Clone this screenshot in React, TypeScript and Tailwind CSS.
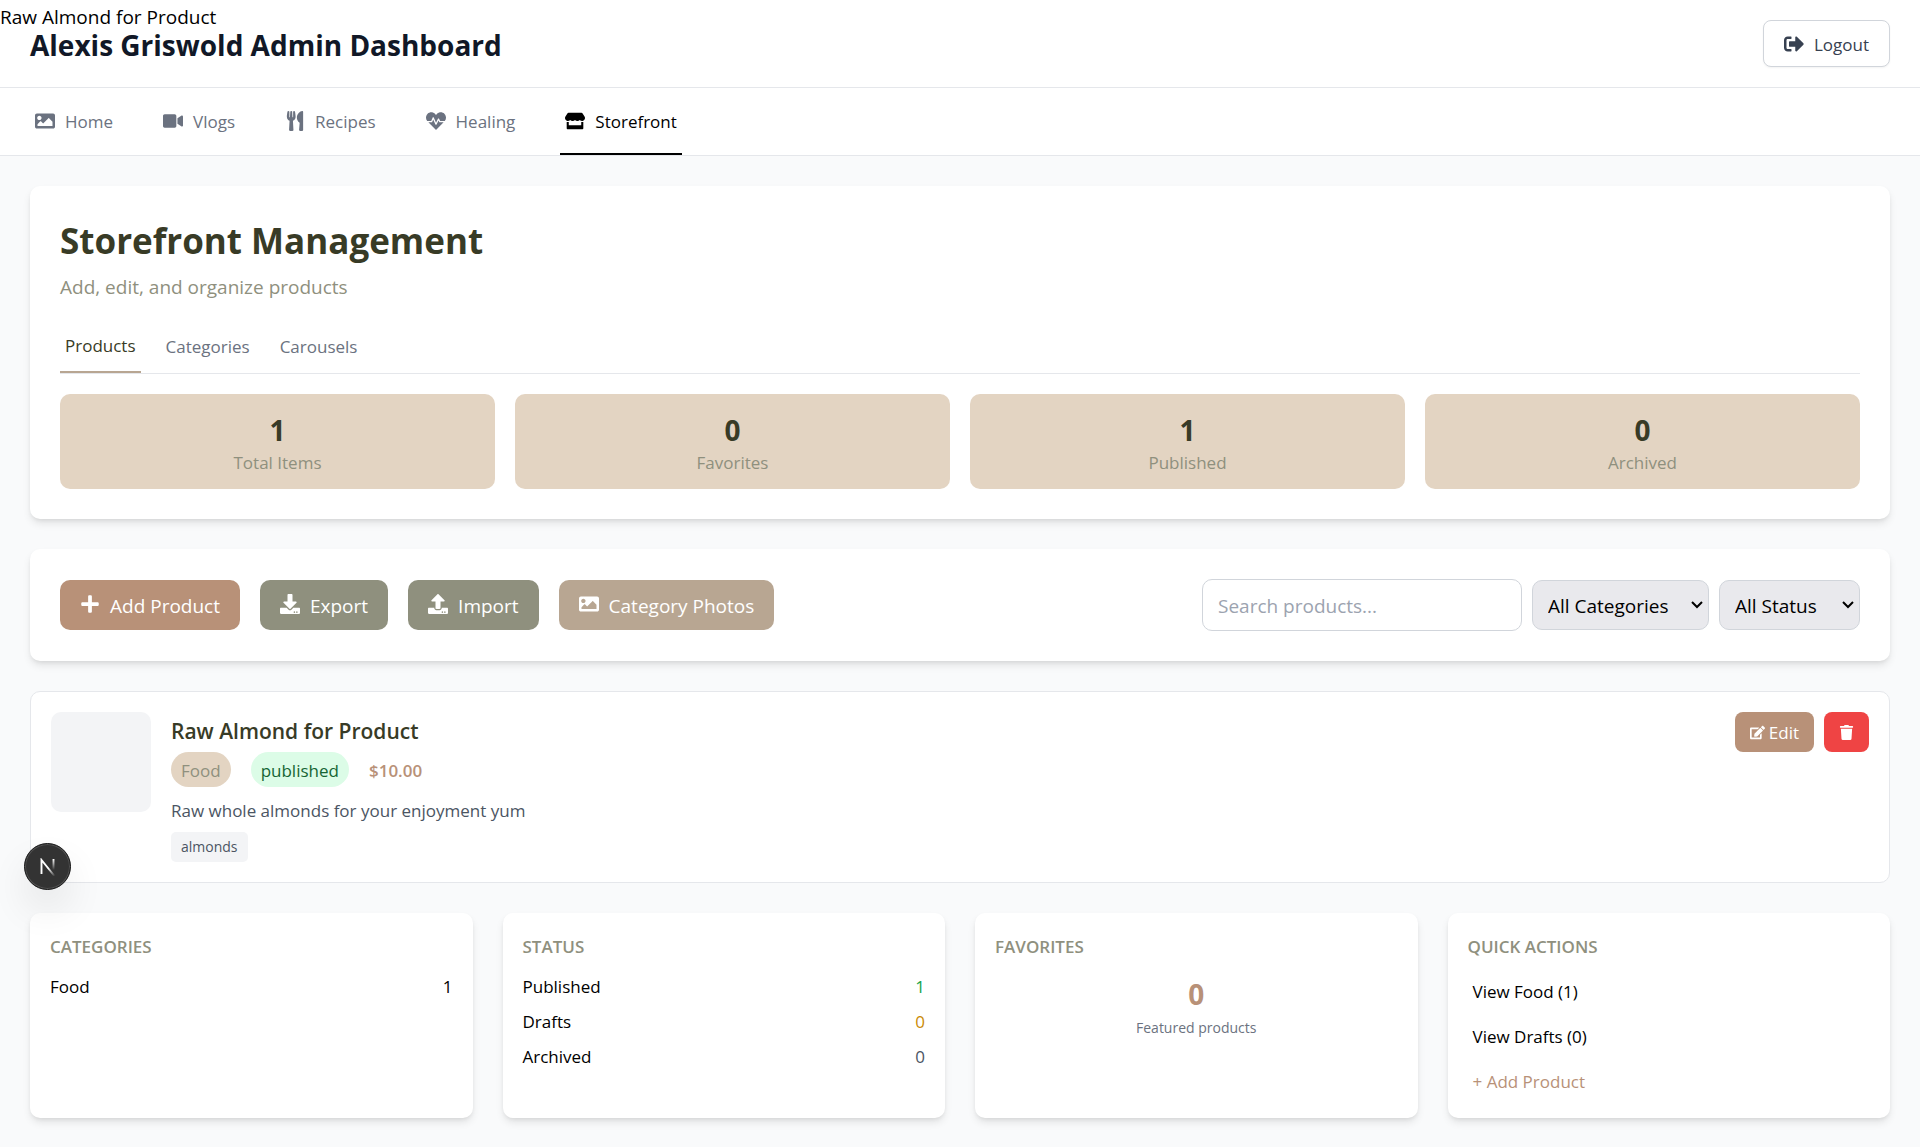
import type { ComponentType, ReactNode } from "react";
import {
  FaDownload,
  FaEdit,
  FaHeartbeat,
  FaImage,
  FaPlus,
  FaSignOutAlt,
  FaStore,
  FaTrash,
  FaUpload,
  FaUtensils,
  FaVideo,
} from "react-icons/fa";

type Icon = ComponentType<{ className?: string }>;

const navItems: { label: string; icon: Icon; active?: boolean }[] = [
  { label: "Home", icon: FaImage },
  { label: "Vlogs", icon: FaVideo },
  { label: "Recipes", icon: FaUtensils },
  { label: "Healing", icon: FaHeartbeat },
  { label: "Storefront", icon: FaStore, active: true },
];

const stats = [
  { value: 1, label: "Total Items" },
  { value: 0, label: "Favorites" },
  { value: 1, label: "Published" },
  { value: 0, label: "Archived" },
];

const tools: { label: string; icon: Icon; color: string }[] = [
  { label: "Add Product", icon: FaPlus, color: "bg-[#b89178]" },
  { label: "Export", icon: FaDownload, color: "bg-[#8f907e]" },
  { label: "Import", icon: FaUpload, color: "bg-[#8f907e]" },
  { label: "Category Photos", icon: FaImage, color: "bg-[#b8a692]" },
];

const statuses = [
  { label: "Published", value: 1, color: "text-[#16a34a]" },
  { label: "Drafts", value: 0, color: "text-[#ca8a04]" },
  { label: "Archived", value: 0, color: "text-[#4b5563]" },
];

const cardShadow = "shadow-[0_5px_8px_-1px_rgba(0,0,0,0.1),0_2px_5px_-2px_rgba(0,0,0,0.1)]";

function Header() {
  return (
    <header className="flex items-center justify-between border-b border-[#e5e7eb] bg-white px-[30px] py-5">
      <h1 className="pt-0.5 text-[28px] leading-[44px] font-bold text-[#111827]">Alexis Griswold Admin Dashboard</h1>
      <button
        type="button"
        className="flex items-center gap-2.5 rounded-[8px] border border-[#d1d5db] bg-white px-5 pt-[11px] pb-[9px] text-[17px] leading-[25px] text-[#374151] shadow-xs"
      >
        <FaSignOutAlt className="mb-0.5 size-5" />
        Logout
      </button>
    </header>
  );
}

function Nav() {
  return (
    <nav className="flex gap-10 border-b border-[#e5e7eb] bg-white px-[30px]">
      {navItems.map(({ label, icon: Glyph, active }) => (
        <a
          key={label}
          href="#"
          aria-current={active ? "page" : undefined}
          className={
            active
              ? "flex items-center gap-2.5 border-b-2 border-black px-[5px] pt-[21px] pb-[19px] text-[17px] leading-[25px] text-black"
              : "flex items-center gap-2.5 border-b-2 border-transparent px-[5px] pt-[21px] pb-[19px] text-[17px] leading-[25px] text-[#6b7280]"
          }
        >
          <Glyph className="mb-0.5 size-5" />
          {label}
        </a>
      ))}
    </nav>
  );
}

function Overview() {
  return (
    <section className={`rounded-[10px] bg-white p-[30px] ${cardShadow}`}>
      <h2 className="text-[35px] leading-[50px] font-bold text-[#383b26]">Storefront Management</h2>
      <p className="mt-1 text-[19px] leading-[35px] text-[#8f907e]">Add, edit, and organize products</p>
      <div className="mt-[15px] flex gap-5 border-b border-[#e5e7eb] text-[17px] leading-[25px]">
        <button type="button" className="border-b-2 border-[#b8a692] px-[5px] py-[13px] text-[#383b26]">
          Products
        </button>
        <button type="button" className="px-[5px] py-[13px] text-[#6b7280]">
          Categories
        </button>
        <button type="button" className="px-[5px] py-[13px] text-[#6b7280]">
          Carousels
        </button>
      </div>
      <div className="mt-5 grid grid-cols-4 gap-5">
        {stats.map(({ value, label }) => (
          <div key={label} className="rounded-[10px] bg-[#e3d4c2] pt-4 pb-3.5 text-center">
            <div className="text-[28px] leading-[40px] font-bold text-[#383b26]">{value}</div>
            <div className="text-[17px] leading-[25px] text-[#8f907e]">{label}</div>
          </div>
        ))}
      </div>
    </section>
  );
}

function FilterSelect({ label, width }: { label: string; width: string }) {
  return (
    <div className={`relative ${width}`}>
      <select
        aria-label={label}
        className="h-[50px] w-full appearance-none rounded-[10px] border border-[#d1d5db] bg-[#e9e9ed] pt-0.5 pl-[15px] text-[19px] text-black"
      >
        <option>{label}</option>
      </select>
      <svg
        viewBox="0 0 12 8"
        aria-hidden="true"
        className="pointer-events-none absolute top-[21px] right-[6px] h-2 w-3 fill-none stroke-black stroke-2"
      >
        <path d="M1 1l5 5 5-5" />
      </svg>
    </div>
  );
}

function Toolbar() {
  return (
    <section className={`flex items-center justify-between rounded-[10px] bg-white p-[30px] ${cardShadow}`}>
      <div className="flex gap-5">
        {tools.map(({ label, icon: Glyph, color }) => (
          <button
            key={label}
            type="button"
            className={`flex h-[50px] items-center gap-2.5 rounded-[10px] px-5 pt-0.5 text-[19px] text-white ${color}`}
          >
            <Glyph className="mb-1 size-5" />
            {label}
          </button>
        ))}
      </div>
      <div className="flex items-center gap-2.5">
        <input
          type="search"
          aria-label="Search products"
          placeholder="Search products..."
          className="h-[52px] w-[320px] rounded-[10px] border border-[#d1d5db] bg-white px-[15px] pt-0.5 text-[19px] placeholder:text-[#9ca3af]"
        />
        <FilterSelect label="All Categories" width="w-[177px]" />
        <FilterSelect label="All Status" width="w-[141px]" />
      </div>
    </section>
  );
}

function ProductRow() {
  return (
    <article className="flex gap-5 rounded-[10px] border border-[#e5e7eb] bg-white p-5">
      <div className="size-[100px] rounded-[10px] bg-[#f3f4f6]" />
      <div className="flex-1">
        <h3 className="pb-0.5 text-[21px] leading-[38px] font-semibold text-[#383b26]">Raw Almond for Product</h3>
        <div className="flex items-center gap-5 text-[17px] leading-[25px]">
          <span className="rounded-full bg-[#e3d4c2] px-2.5 pt-1.5 pb-1 text-[#8f907e]">Food</span>
          <span className="rounded-full bg-[#dcfce7] px-2.5 pt-1.5 pb-1 text-[#166534]">published</span>
          <span className="pt-0.5 font-semibold text-[#b89178]">$10.00</span>
        </div>
        <p className="mt-[11px] text-[17px] leading-[25px] text-[#4b5563]">Raw whole almonds for your enjoyment yum</p>
        <div className="mt-[9px] flex">
          <span className="rounded-[5px] bg-[#f3f4f6] px-2.5 py-[5px] text-[14px] leading-5 text-[#4b5563]">
            almonds
          </span>
        </div>
      </div>
      <div className="flex items-start gap-2.5">
        <button
          type="button"
          className="flex h-10 items-center gap-1 rounded-[8px] bg-[#b89178] px-[15px] pt-0.5 text-[17px] text-white"
        >
          <FaEdit className="mb-0.5 size-[15px]" />
          Edit
        </button>
        <button
          type="button"
          aria-label="Delete product"
          className="flex h-10 w-[45px] items-center justify-center rounded-[8px] bg-[#ef4444] text-white"
        >
          <FaTrash className="size-[15px]" />
        </button>
      </div>
    </article>
  );
}

function SummaryCard({ title, children }: { title: string; children: ReactNode }) {
  return (
    <section className={`rounded-[10px] bg-white px-5 pt-[21px] pb-[19px] ${cardShadow}`}>
      <h3 className="mb-[15px] text-[17px] leading-[25px] font-semibold text-[#8f907e]">{title}</h3>
      {children}
    </section>
  );
}

function Summary() {
  return (
    <div className="grid grid-cols-4 gap-[30px] text-[17px] leading-[25px] text-black">
      <SummaryCard title="CATEGORIES">
        <div className="flex justify-between">
          <span>Food</span>
          <span>1</span>
        </div>
      </SummaryCard>
      <SummaryCard title="STATUS">
        <div className="flex flex-col gap-2.5">
          {statuses.map(({ label, value, color }) => (
            <div key={label} className="flex justify-between">
              <span>{label}</span>
              <span className={color}>{value}</span>
            </div>
          ))}
        </div>
      </SummaryCard>
      <SummaryCard title="FAVORITES">
        <div className="text-center">
          <div className="text-[28px] leading-[40px] font-bold text-[#b89178]">0</div>
          <div className="mt-1 text-[14px] leading-5 text-[#6b7280]">Featured products</div>
        </div>
      </SummaryCard>
      <SummaryCard title="QUICK ACTIONS">
        <div className="flex flex-col items-stretch gap-2.5">
          <button type="button" className="px-[5px] py-[5px] text-left">
            View Food (1)
          </button>
          <button type="button" className="px-[5px] py-[5px] text-left">
            View Drafts (0)
          </button>
          <button type="button" className="px-[5px] py-[5px] text-left text-[#b89178]">
            + Add Product
          </button>
        </div>
      </SummaryCard>
    </div>
  );
}

function DevToolsBadge() {
  return (
    <button
      type="button"
      aria-label="Open Next.js Dev Tools"
      className="fixed bottom-[257px] left-6 flex size-[47px] items-center justify-center rounded-full border border-[#171717] bg-[#333333] shadow-[inset_0_0_0_1px_rgba(255,255,255,0.15),0_20px_40px_-4px_rgba(0,0,0,0.12)]"
    >
      <svg viewBox="0 0 16 18" fill="none" className="h-[18px] w-4">
        <defs>
          <linearGradient id="diagonal" x1="9" y1="10" x2="15" y2="18" gradientUnits="userSpaceOnUse">
            <stop stopColor="#fff" />
            <stop offset="1" stopColor="#fff" stopOpacity="0" />
          </linearGradient>
          <linearGradient id="stem" x1="14" y1="1" x2="14" y2="12" gradientUnits="userSpaceOnUse">
            <stop stopColor="#fff" />
            <stop offset="1" stopColor="#fff" stopOpacity="0" />
          </linearGradient>
        </defs>
        <path d="M1.5 16V2l13 16" stroke="url(#diagonal)" strokeWidth="1.9" />
        <path d="M13.5 1v11" stroke="url(#stem)" strokeWidth="1.9" />
      </svg>
    </button>
  );
}

export default function App() {
  return (
    <div className="relative min-h-screen bg-[#f9fafb] font-['Open_Sans','Noto_Sans',sans-serif]">
      <Header />
      <Nav />
      <main className="flex flex-col gap-[30px] p-[30px]">
        <Overview />
        <Toolbar />
        <ProductRow />
        <Summary />
      </main>
      <p className="absolute top-0 left-0 text-[19px] leading-[34px] text-black">Raw Almond for Product</p>
      <DevToolsBadge />
    </div>
  );
}
